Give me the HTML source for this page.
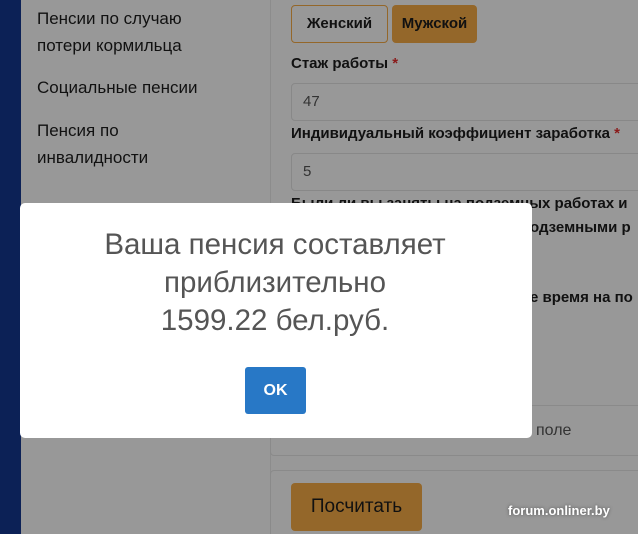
<!DOCTYPE html>
<html><head><meta charset="utf-8"><style>
*{box-sizing:border-box;margin:0;padding:0}
html,body{width:638px;height:534px;overflow:hidden;background:#989898}
body{font-family:"Liberation Sans","DejaVu Sans",sans-serif;position:relative;color:#111}
.bg{position:absolute;left:0;top:0;width:638px;height:534px;background:#989898}
.nav{position:absolute;left:0;top:0;width:21px;height:534px;background:#0c2156}
.side{position:absolute;left:37px;font-size:17px;line-height:27px;color:#111}
.divider{position:absolute;left:270px;top:0;width:1px;height:534px;background:#8c8c8c}
.btn{position:absolute;top:5px;height:38px;border-radius:4px;font-weight:bold;font-size:15px;line-height:38px;text-align:center}
.lbl{position:absolute;left:291px;font-weight:bold;font-size:15px;color:#111;white-space:nowrap}
.lbl b{color:#8a1a1a}
.inp{position:absolute;left:291px;width:360px;height:38px;border:1px solid #888;border-radius:4px;padding-left:11px;font-size:15px;line-height:36px;color:#333}
.card{position:absolute;left:270px;width:380px;border:1px solid #8a8a8a;border-radius:4px}
.modal{position:absolute;left:20px;top:203px;width:512px;height:235px;background:#fff;border-radius:5px;text-align:center}
.modal p{position:absolute;left:0;width:510px;top:23px;font-size:29.5px;line-height:38px;color:#555}
.ok{position:absolute;left:225px;top:164px;width:61px;height:47px;background:#2878c6;border-radius:3px;color:#fff;font-weight:bold;font-size:16px;line-height:47px}
.calc{position:absolute;left:291px;top:483px;width:131px;height:48px;background:#94672a;border-radius:4px;font-size:19px;line-height:48px;text-align:center;color:#111}
.wm{position:absolute;left:508px;top:503px;color:#fff;font-weight:bold;font-size:13px;text-shadow:0 0 3px #555}
</style></head><body>
<div class="bg"></div>
<div class="nav"></div>
<div class="side" style="top:5px">Пенсии по случаю<br>потери кормильца</div>
<div class="side" style="top:74px">Социальные пенсии</div>
<div class="side" style="top:117px">Пенсия по<br>инвалидности</div>
<div class="divider"></div>
<div class="btn" style="left:291px;width:97px;border:1px solid #94672a;line-height:36px">Женский</div>
<div class="btn" style="left:392px;width:85px;background:#94672a">Мужской</div>
<div class="lbl" style="top:55px">Стаж работы <b>*</b></div>
<div class="inp" style="top:83px">47</div>
<div class="lbl" style="top:125px">Индивидуальный коэффициент заработка <b>*</b></div>
<div class="inp" style="top:153px">5</div>
<div class="lbl" style="top:195px">Были ли вы заняты на подземных работах и</div>
<div class="lbl" style="top:219px;left:530px">одземными р</div>
<div class="lbl" style="top:289px;left:530px">е время на по</div>
<div class="card" style="top:405px;height:51px"><span style="position:absolute;left:265px;top:16px;font-size:16px;color:#333">поле</span></div>
<div class="card" style="top:470px;height:70px"></div>
<div class="calc">Посчитать</div>
<div class="wm">forum.onliner.by</div>
<div class="modal"><p>Ваша пенсия составляет<br>приблизительно<br>1599.22 бел.руб.</p><div class="ok">OK</div></div>
</body></html>
